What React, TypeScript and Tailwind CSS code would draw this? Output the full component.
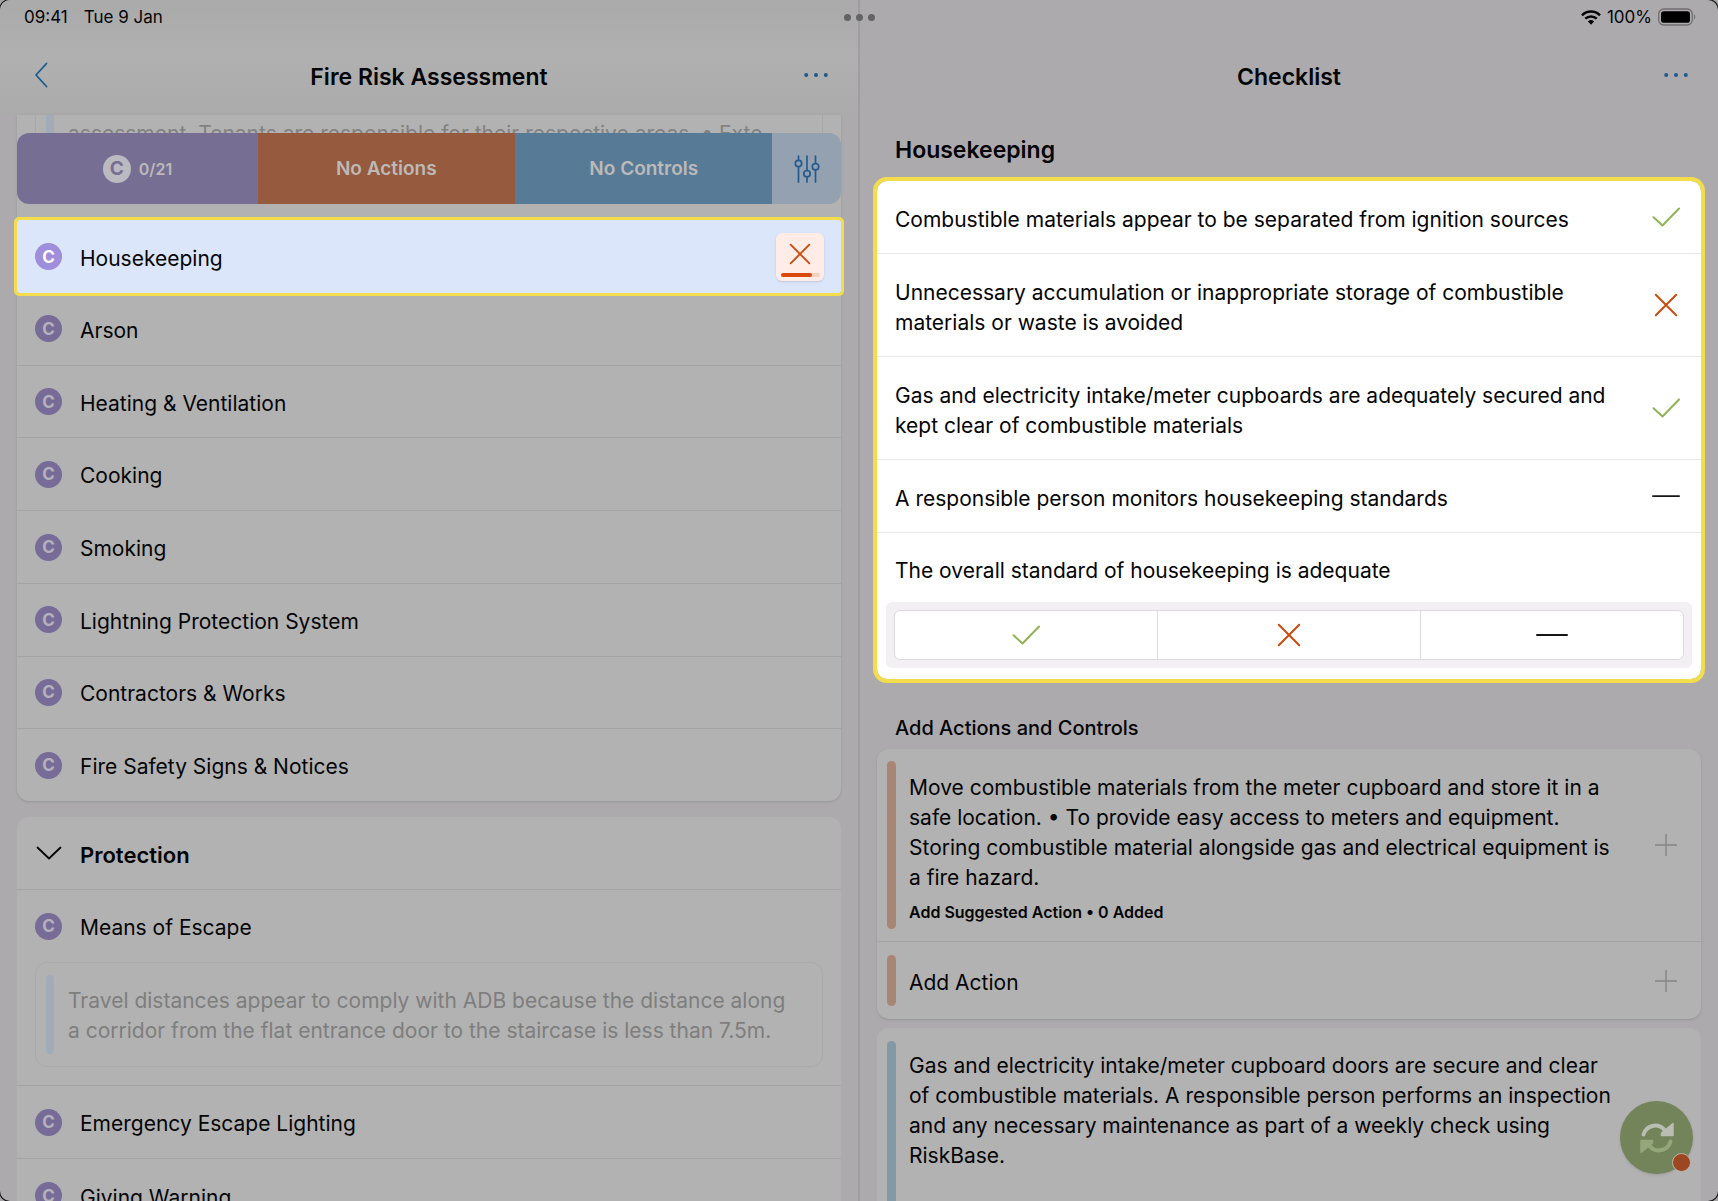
import React, { useState } from "react";

type IconProps = { className?: string };

function Check({ className = "" }: IconProps) {
  return (
    <svg viewBox="0 0 28 20" className={"h-5 w-7 " + className} fill="none" stroke="#8fb456" strokeWidth="2" strokeLinecap="round" strokeLinejoin="round" aria-hidden="true">
      <path d="M1.500 10.200 10.500 18.500 27 1.500" />
    </svg>
  );
}

function Cross({ className = "size-6" }: IconProps) {
  return (
    <svg viewBox="0 0 24 24" className={className} fill="none" stroke="#cb4a10" strokeWidth="2" strokeLinecap="round" aria-hidden="true">
      <path d="M1.8 1.8 22.2 22.2M22.2 1.8 1.8 22.2" />
    </svg>
  );
}

function Dash({ className = "w-8" }: IconProps) {
  return (
    <svg viewBox="0 0 32 4" className={"h-1 " + className} fill="none" stroke="#161616" strokeWidth="2" strokeLinecap="round" aria-hidden="true">
      <path d="M1 2H31" />
    </svg>
  );
}

function Plus() {
  return (
    <svg viewBox="0 0 22 22" className="size-[22px]" fill="none" stroke="#858585" strokeWidth="1.4" aria-hidden="true">
      <path d="M11 0V22M0 11H22" />
    </svg>
  );
}

function Dots() {
  return (
    <svg viewBox="0 0 24 4" className="h-1 w-6" fill="#1c5a8c" aria-hidden="true">
      <circle cx="2.2" cy="2" r="2" />
      <circle cx="12" cy="2" r="2" />
      <circle cx="21.8" cy="2" r="2" />
    </svg>
  );
}

function Sliders() {
  return (
    <svg viewBox="0 0 26 28" className="h-7 w-[26px]" fill="none" stroke="#245b8f" strokeWidth="1.7" strokeLinecap="round" aria-hidden="true">
      <path d="M4.500 1v4M4.500 12v15M13 1v14.500M13 22v5M21.500 1v7.500M21.500 15v12" />
      <circle cx="4.500" cy="8.500" r="3.200" />
      <circle cx="13" cy="18.700" r="3.200" />
      <circle cx="21.500" cy="11.700" r="3.200" />
    </svg>
  );
}

function Wifi() {
  return (
    <svg viewBox="0 0 20 15" className="h-[15px] w-5" fill="none" stroke="#050505" strokeWidth="2.500" aria-hidden="true">
      <path d="M1 5.300a12.800 12.800 0 0 1 18 0" />
      <path d="M4.300 8.700a8.200 8.200 0 0 1 11.400 0" />
      <path d="M10 14.800 6.900 11.500a4.500 4.500 0 0 1 6.200 0Z" fill="#050505" stroke="none" />
    </svg>
  );
}

function Battery() {
  return (
    <svg viewBox="0 0 38 18" className="h-[18px] w-[38px]" fill="none" aria-hidden="true">
      <rect x="0.700" y="1" width="33.600" height="16" rx="5" stroke="#6f6e70" strokeWidth="1.300" />
      <rect x="3" y="3.300" width="29" height="11.400" rx="2.800" fill="#000" />
      <path d="M36 6.300c1.600.6 1.600 4.800 0 5.400Z" fill="#6f6e70" />
    </svg>
  );
}

function Sync() {
  return (
    <svg viewBox="0 0 36 34" className="h-[34px] w-9" fill="none" aria-hidden="true">
      <path d="M4.500 13.500C7 4.500 19 1 26 9.500" stroke="#b9bdb2" strokeWidth="4" strokeLinecap="round" />
      <path d="M34 2.500V14.500H22.500V12Z" fill="#b9bdb2" stroke="#b9bdb2" strokeWidth="1.500" strokeLinejoin="round" />
      <path d="M31.500 20.500C29 29.500 17 33 10 24.500" stroke="#94a77b" strokeWidth="4" strokeLinecap="round" />
      <path d="M2 31.500V19.500H13.500V22Z" fill="#94a77b" stroke="#94a77b" strokeWidth="1.500" strokeLinejoin="round" />
    </svg>
  );
}

function Badge({ active = false }: { active?: boolean }) {
  return (
    <span
      className={
        "flex size-[27px] shrink-0 items-center justify-center rounded-full text-[17px] font-bold " +
        (active ? "bg-[#9f8edb] text-white" : "bg-[#766c97] text-[#b5b2bd]")
      }
    >
      C
    </span>
  );
}

const riskRows = [
  "Arson",
  "Heating & Ventilation",
  "Cooking",
  "Smoking",
  "Lightning Protection System",
  "Contractors & Works",
  "Fire Safety Signs & Notices",
];

function Row({ label }: { label: string }) {
  return (
    <li className="flex flex-1 border-b border-[#a3a3a4] last:border-b-0">
      <button className="flex w-full items-center gap-[18px] px-[18px] text-left">
        <Badge />
        <span className="pt-1">{label}</span>
      </button>
    </li>
  );
}

function LeftPane() {
  return (
    <section className="flex min-w-0 flex-1 flex-col overflow-hidden border-r-2 border-[#9f9da0]">
      <header className="flex h-[115px] shrink-0 items-end bg-linear-to-b from-[#aaaaab] via-[#b0b0b0] to-[#ababac] px-[30px] pb-[22px]">
        <button aria-label="Back" className="mb-0.5 flex h-8 w-12 items-center pl-1">
          <svg viewBox="0 0 14 26" className="h-[26px] w-3.5" fill="none" stroke="#1c5a8c" strokeWidth="1.800" strokeLinecap="round" strokeLinejoin="round" aria-hidden="true">
            <path d="M12.500 1.500 2 13 12.500 24.500" />
          </svg>
        </button>
        <h1 className="flex-1 text-center text-[23px] leading-8 font-semibold">Fire Risk Assessment</h1>
        <button aria-label="More options" className="mb-0.5 flex h-8 w-12 items-center justify-end">
          <Dots />
        </button>
      </header>

      <div className="px-[17px]">
        <div className="rounded-b-xl bg-[#b2b2b2] shadow-sm">
          <div className="h-[18px] overflow-hidden px-[18px]">
            <div className="flex border-x border-[#a8a8aa] pl-2.5">
              <span className="w-2 shrink-0 bg-[#a2acb8]" />
              <p className="truncate pt-1 pl-3.5 text-[#828282]">
                assessment. Tenants are responsible for their respective areas. • Exte...
              </p>
            </div>
          </div>
          <div className="flex h-[71px] overflow-hidden rounded-xl text-[19px] font-semibold text-[#bdb9b8]">
            <button className="flex w-[241px] items-center justify-center gap-2 bg-[#766f93]">
              <span className="flex size-7 items-center justify-center rounded-full bg-[#bcbac1] text-[19px] font-bold text-[#766f93]">C</span>
              <span className="text-[16px]">0/21</span>
            </button>
            <button className="flex-1 bg-[#965a3f]">No Actions</button>
            <button className="flex-1 border-l border-[#7c7077] bg-[#577b96]">No Controls</button>
            <button aria-label="Filters" className="flex w-[69px] items-center justify-center bg-[#94a1b0]">
              <Sliders />
            </button>
          </div>

          <div className="h-4" />
          <button className="flex h-[73px] w-full items-center gap-[18px] rounded-xs bg-[#dce6fa] pr-[17px] pl-[18px] text-left outline-3 outline-[#f3dd4c]">
            <Badge active />
            <span className="flex-1 pt-1">Housekeeping</span>
            <span className="flex size-12 flex-col items-center justify-between rounded-md bg-[#ffece6] pt-2.5 pb-1 shadow-sm">
              <Cross className="size-[22px]" />
              <span className="h-1 w-[39px] rounded-full bg-[#fad0bf]">
                <span className="block h-1 w-[31px] rounded-full bg-[#d9480f]" />
              </span>
            </span>
          </button>
          <ul className="flex min-h-[508px] flex-col">
            {riskRows.map((label) => (
              <Row key={label} label={label} />
            ))}
          </ul>
        </div>

        <div className="mt-4 rounded-xl bg-[#b2b2b2]">
          <button className="flex h-[73px] w-full items-center gap-[18px] border-b border-[#a3a3a4] px-[18px] text-left text-[22px] font-semibold">
            <span className="flex w-[27px] justify-center">
              <svg viewBox="0 0 26 14" className="h-3.5 w-[26px]" fill="none" stroke="#050505" strokeWidth="1.800" strokeLinecap="round" strokeLinejoin="round" aria-hidden="true">
                <path d="M1.500 1.500 13 12.500 24.500 1.500" />
              </svg>
            </span>
            <span className="pt-1">Protection</span>
          </button>
          <div className="border-b border-[#a3a3a4] px-[18px] pb-[18px]">
            <button className="flex h-[72px] w-full items-center gap-[18px] text-left">
              <Badge />
              <span className="pt-1">Means of Escape</span>
            </button>
            <div className="flex rounded-xl border border-[#a9a9aa] py-3 pl-2.5 text-[#7e7e7e]">
              <span className="w-2 shrink-0 rounded-full bg-[#a2acb8]" />
              <p className="pt-[11px] pr-6 pb-2 pl-3.5">
                Travel distances appear to comply with ADB because the distance along a corridor from the flat entrance door to the staircase is less than 7.5m.
              </p>
            </div>
          </div>
          <ul>
            <li className="flex h-[73px] border-b border-[#a3a3a4]">
              <button className="flex w-full items-center gap-[18px] px-[18px] text-left">
                <Badge />
                <span className="pt-1">Emergency Escape Lighting</span>
              </button>
            </li>
            <li className="flex h-[73px]">
              <button className="flex w-full items-center gap-[18px] px-[18px] text-left">
                <Badge />
                <span className="pt-1">Giving Warning</span>
              </button>
            </li>
          </ul>
        </div>
      </div>
    </section>
  );
}

const checks = [
  { text: "Combustible materials appear to be separated from ignition sources", icon: <Check /> },
  { text: "Unnecessary accumulation or inappropriate storage of combustible materials or waste is avoided", icon: <Cross /> },
  { text: "Gas and electricity intake/meter cupboards are adequately secured and kept clear of combustible materials", icon: <Check /> },
  { text: "A responsible person monitors housekeeping standards", icon: <Dash className="w-7" /> },
];

function RightPane() {
  const [answer, setAnswer] = useState<string | null>(null);
  return (
    <section className="relative flex min-w-0 flex-1 flex-col overflow-hidden">
      <header className="flex h-[115px] shrink-0 items-end px-[30px] pb-[22px]">
        <span className="w-12" />
        <h1 className="flex-1 text-center text-[23px] leading-8 font-semibold">Checklist</h1>
        <button aria-label="More options" className="mb-0.5 flex h-8 w-12 items-center justify-end">
          <Dots />
        </button>
      </header>

      <div className="px-[17px]">
        <h2 className="pt-5 pb-4 pl-[18px] text-[23px] font-semibold">Housekeeping</h2>
        <div className="rounded-[10px] bg-white outline-4 outline-[#f3dd4c]">
          <ul>
            {checks.map((c) => (
              <li key={c.text} className="flex items-center border-b border-[#e8e8ea] pl-[18px]">
                <p className="flex-1 pt-6 pb-[18px]">{c.text}</p>
                <span className="flex w-[70px] shrink-0 justify-center">{c.icon}</span>
              </li>
            ))}
          </ul>
          <p className="pt-[23px] pb-4 pl-[18px]">The overall standard of housekeeping is adequate</p>
          <div className="px-[9px] pb-[11px]">
            <div className="rounded-md bg-[#f2f0f3] p-2">
              <div className="flex h-[50px] divide-x divide-[#dcdadd] rounded-md border border-[#dcdadd] bg-white">
                {[
                  { name: "Yes", icon: <Check /> },
                  { name: "No", icon: <Cross /> },
                  { name: "Not applicable", icon: <Dash /> },
                ].map((o) => (
                  <button
                    key={o.name}
                    aria-label={o.name}
                    aria-pressed={answer === o.name}
                    onClick={() => setAnswer(o.name)}
                    className="flex flex-1 items-center justify-center"
                  >
                    {o.icon}
                  </button>
                ))}
              </div>
            </div>
          </div>
        </div>

        <h2 className="pt-[34px] pb-1.5 pl-[18px] text-[20px] font-medium">Add Actions and Controls</h2>
        <div className="rounded-xl bg-[#b2b2b2] shadow-sm">
          <button className="flex w-full items-center border-b border-[#a3a3a4] py-3 pl-2.5 text-left">
            <span className="w-[9px] shrink-0 self-stretch rounded-full bg-[#a98576]" />
            <span className="flex-1 pt-3 pr-3 pl-[13px]">
              <span className="block">
                Move combustible materials from the meter cupboard and store it in a safe location. • To provide easy access to meters and equipment. Storing combustible material alongside gas and electrical equipment is a fire hazard.
              </span>
              <span className="block pt-1 pb-0.5 text-[16px] font-semibold">Add Suggested Action • 0 Added</span>
            </span>
            <span className="flex w-[70px] shrink-0 justify-center">
              <Plus />
            </span>
          </button>
          <button className="flex h-[77px] w-full items-center py-[13px] pl-2.5 text-left">
            <span className="w-[9px] shrink-0 self-stretch rounded-full bg-[#a98576]" />
            <span className="flex-1 pt-1 pl-[13px]">Add Action</span>
            <span className="flex w-[70px] shrink-0 justify-center">
              <Plus />
            </span>
          </button>
        </div>

        <div className="mt-[9px] rounded-xl bg-[#b2b2b2]">
          <button className="flex min-h-[196px] w-full py-[13px] pl-2.5 text-left">
            <span className="w-[9px] shrink-0 self-stretch rounded-full bg-[#8399a5]" />
            <span className="flex-1 pt-2.5 pr-[82px] pl-[13px]">
              Gas and electricity intake/meter cupboard doors are secure and clear of combustible materials. A responsible person performs an inspection and any necessary maintenance as part of a weekly check using RiskBase.
            </span>
          </button>
        </div>
      </div>

      <button aria-label="Sync" className="absolute right-[25px] bottom-[27px] flex size-[73px] items-center justify-center rounded-full bg-[#73845b] shadow-sm">
        <Sync />
        <span className="absolute right-0.5 bottom-0.5 size-[19px] rounded-full border border-[#bcb5a8] bg-[#9c4622]" />
      </button>
    </section>
  );
}

export default function App() {
  return (
    <div className="h-screen overflow-hidden bg-[#a3a3a3] font-['Inter',sans-serif] text-[21px] leading-[30px] text-[#050505]">
      <div className="relative flex h-full overflow-hidden rounded-[10px] bg-[#acaaad] shadow-[0_0_0_1px_#111111]">
        <LeftPane />
        <RightPane />
        <div className="absolute inset-x-0 top-0 grid h-[34px] grid-cols-3 items-center pr-[22px] pl-6 text-[17px]">
          <div className="flex gap-4">
            <span>09:41</span>
            <span>Tue 9 Jan</span>
          </div>
          <div className="flex justify-center gap-[5px]">
            <span className="size-[7px] rounded-full bg-[#636264]" />
            <span className="size-[7px] rounded-full bg-[#636264]" />
            <span className="size-[7px] rounded-full bg-[#636264]" />
          </div>
          <div className="flex items-center justify-end gap-1.5">
            <Wifi />
            <span>100%</span>
            <Battery />
          </div>
        </div>
      </div>
    </div>
  );
}
